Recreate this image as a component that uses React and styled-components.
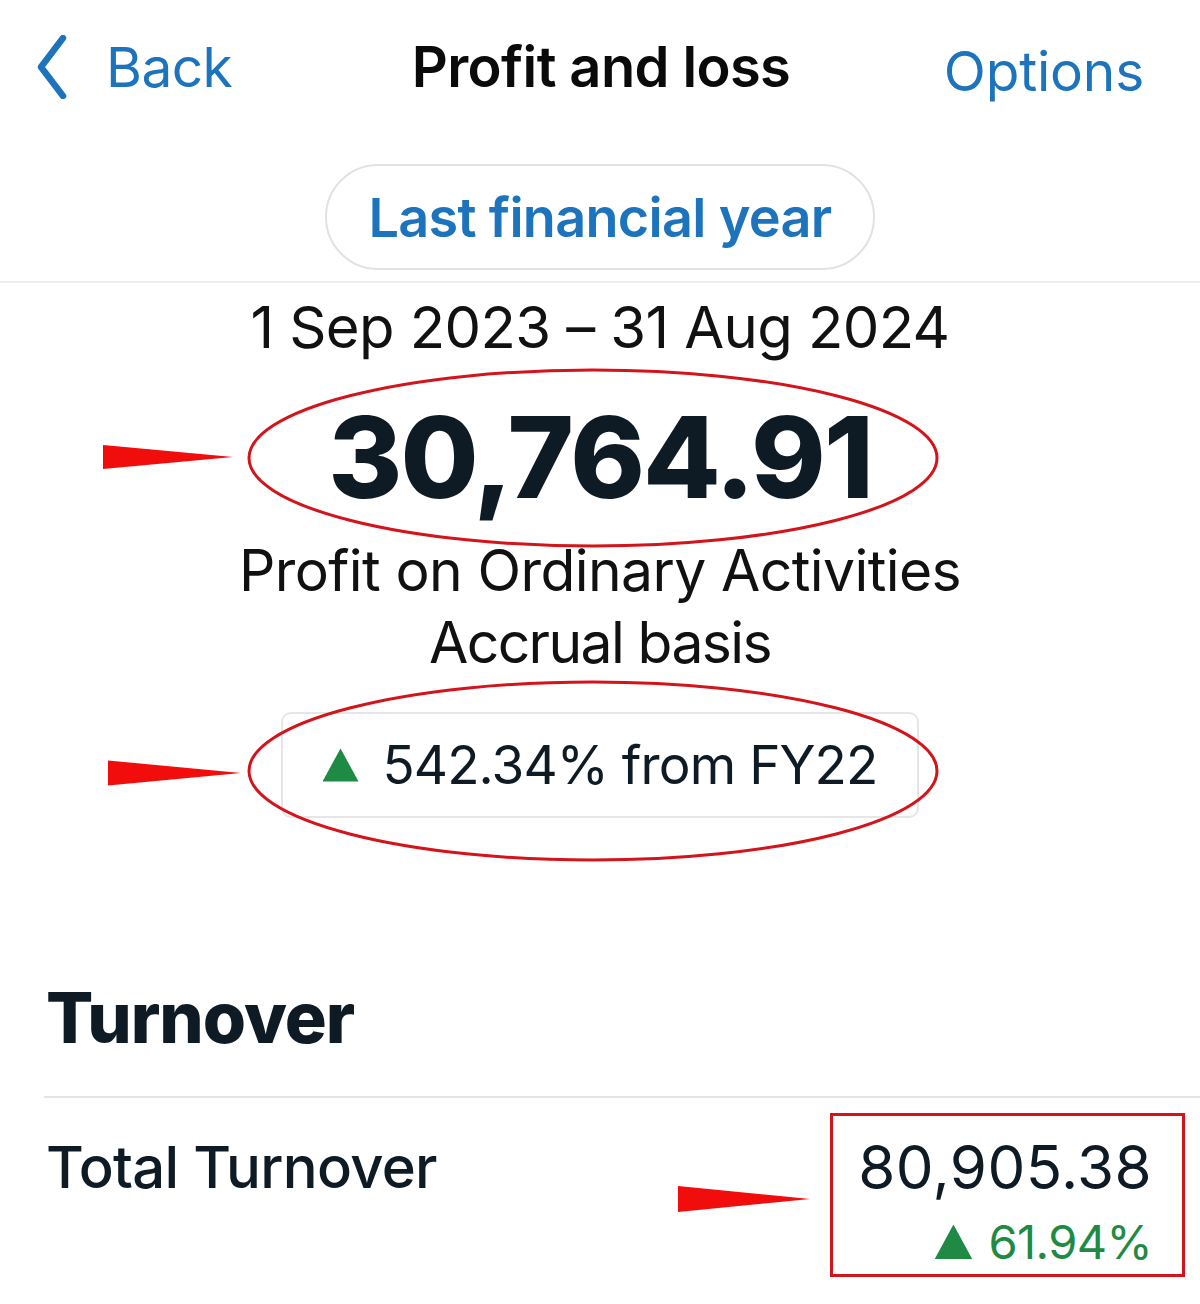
import React from "react";
import styled, { createGlobalStyle } from "styled-components";

const GlobalStyle = createGlobalStyle`
  html, body { margin: 0; padding: 0; background: #ffffff; }
  body { font-family: Inter, "Noto Sans", "Liberation Sans", sans-serif; color: #0e1a24; }
  * { box-sizing: border-box; }
`;

const BLUE = "#1d74bd";
const INK = "#0e1a24";
const GREEN = "#1f8a43";
const RED = "#d3141b";

const Page = styled.div`
  width: 1200px;
  min-height: 1304px;
  background: #fff;
  overflow: hidden;
`;

const NavBar = styled.header`
  display: grid;
  grid-template-columns: 1fr auto 1fr;
  align-items: center;
  height: 134px;
  padding: 0 56px 0 36px;
`;

const NavButton = styled.button`
  display: flex;
  align-items: center;
  gap: 38px;
  justify-self: ${(p) => (p.$end ? "end" : "start")};
  border: 0;
  background: none;
  padding: 0;
  font-family: inherit;
  font-size: 55px;
  font-weight: 400;
  color: ${BLUE};
  letter-spacing: ${(p) => (p.$end ? "-0.2px" : "-0.6px")};
  margin-top: ${(p) => (p.$end ? "8px" : "0")};
`;

const Title = styled.h1`
  margin: 0 0 0 22px;
  font-size: 56px;
  font-weight: 600;
  color: #0a0a0a;
  letter-spacing: -0.6px;
`;

const PillRow = styled.div`
  display: flex;
  justify-content: center;
  padding: 30px 0 11px;
  border-bottom: 2px solid #ececec;
`;

const Pill = styled.button`
  height: 106px;
  padding: 0 41px;
  border: 2px solid #e2e2e2;
  border-radius: 53px;
  background: #fff;
  font-family: inherit;
  font-size: 54px;
  font-weight: 600;
  color: ${BLUE};
  letter-spacing: -0.7px;
`;

const Summary = styled.section`
  position: relative;
  display: flex;
  flex-direction: column;
  align-items: center;
  padding-top: 8px;
  height: 690px;
`;

const DateRange = styled.div`
  font-size: 58px;
  font-weight: 400;
  letter-spacing: -0.6px;
  line-height: 72px;
  color: #111;
`;

const BigNumber = styled.div`
  font-size: 113px;
  font-weight: 800;
  letter-spacing: -2px;
  line-height: 140px;
  margin-top: 24px;
  color: ${INK};
`;

const Caption = styled.div`
  font-size: 57px;
  font-weight: 400;
  letter-spacing: ${(p) => p.$ls ?? -0.6}px;
  line-height: 68px;
  color: #111;
  margin-top: ${(p) => p.$mt || 0}px;
`;

const Badge = styled.div`
  display: flex;
  align-items: center;
  justify-content: center;
  gap: 24px;
  width: 638px;
  height: 106px;
  margin-top: 35px;
  border: 2px solid #e6e6e6;
  border-radius: 10px;
  font-size: 53px;
  letter-spacing: -0.9px;
  color: ${INK};
`;

const Triangle = styled.span`
  display: inline-block;
  width: ${(p) => p.$size}px;
  height: ${(p) => p.$size * 0.92}px;
  background: ${GREEN};
  clip-path: polygon(50% 0, 100% 100%, 0 100%);
`;

const Overlay = styled.svg`
  position: absolute;
  left: 0;
  top: 0;
  pointer-events: none;
`;

const Section = styled.section`
  padding-left: 44px;
`;

const SectionTitle = styled.h2`
  margin: 0;
  padding-left: 2px;
  font-size: 70px;
  font-weight: 800;
  letter-spacing: -1px;
  line-height: 90px;
  color: ${INK};
`;

const Divider = styled.div`
  height: 2px;
  background: #e4e4e4;
  margin-top: 33px;
`;

const Row = styled.div`
  display: flex;
  justify-content: space-between;
  align-items: flex-start;
  padding: 34px 48px 0 2px;
`;

const RowLabel = styled.div`
  font-size: 58px;
  font-weight: 500;
  letter-spacing: -0.7px;
  line-height: 70px;
  color: ${INK};
`;

const ValueBox = styled.div`
  position: relative;
  display: flex;
  flex-direction: column;
  align-items: flex-end;
`;

const Value = styled.div`
  font-size: 60px;
  font-weight: 400;
  letter-spacing: 0.4px;
  line-height: 70px;
  color: ${INK};
`;

const Change = styled.div`
  display: flex;
  align-items: center;
  gap: 16px;
  margin-top: 9px;
  font-size: 47px;
  letter-spacing: -0.6px;
  line-height: 62px;
  color: ${GREEN};
`;

const Highlight = styled.div`
  position: absolute;
  left: -28px;
  right: -33px;
  top: -19px;
  bottom: -4px;
  border: 3px solid ${RED};
`;

const SideArrow = styled.svg`
  position: absolute;
  right: calc(100% + 48px);
  top: ${(p) => p.$top}px;
`;

const Arrow = ({ x1, x2, y, h }) => (
  <polygon points={`${x1},${y - h / 2} ${x2},${y} ${x1},${y + h / 2}`} fill="#f20d0d" />
);

export default function App() {
  return (
    <>
      <GlobalStyle />
      <Page>
        <NavBar>
          <NavButton>
            <svg width="32" height="64" viewBox="0 0 32 64" fill="none">
              <path d="M27 3 L5 32 L27 61" stroke={BLUE} strokeWidth="6.5" strokeLinecap="round" strokeLinejoin="round" />
            </svg>
            Back
          </NavButton>
          <Title>Profit and loss</Title>
          <NavButton $end>Options</NavButton>
        </NavBar>

        <PillRow>
          <Pill>Last financial year</Pill>
        </PillRow>

        <Summary>
          <DateRange>1 Sep 2023 – 31 Aug 2024</DateRange>
          <BigNumber>30,764.91</BigNumber>
          <Caption $mt={10}>Profit on Ordinary Activities</Caption>
          <Caption $mt={4} $ls={-1.6}>Accrual basis</Caption>
          <Badge>
            <Triangle $size={36} />
            542.34% from FY22
          </Badge>
          <Overlay width="1200" height="690" viewBox="0 0 1200 690">
            <ellipse cx="593" cy="175" rx="344" ry="88" fill="none" stroke={RED} strokeWidth="3" />
            <ellipse cx="593" cy="488" rx="344" ry="89" fill="none" stroke={RED} strokeWidth="3" />
            <Arrow x1={103} x2={233} y={174} h={24} />
            <Arrow x1={108} x2={241} y={490} h={25} />
          </Overlay>
        </Summary>

        <Section>
          <SectionTitle>Turnover</SectionTitle>
          <Divider />
          <Row>
            <RowLabel>Total Turnover</RowLabel>
            <ValueBox>
              <Value>80,905.38</Value>
              <Change>
                <Triangle $size={38} />
                61.94%
              </Change>
              <Highlight />
              <SideArrow $top={53} width="132" height="28" viewBox="0 0 132 28">
                <Arrow x1={0} x2={132} y={14} h={26} />
              </SideArrow>
            </ValueBox>
          </Row>
        </Section>
      </Page>
    </>
  );
}
